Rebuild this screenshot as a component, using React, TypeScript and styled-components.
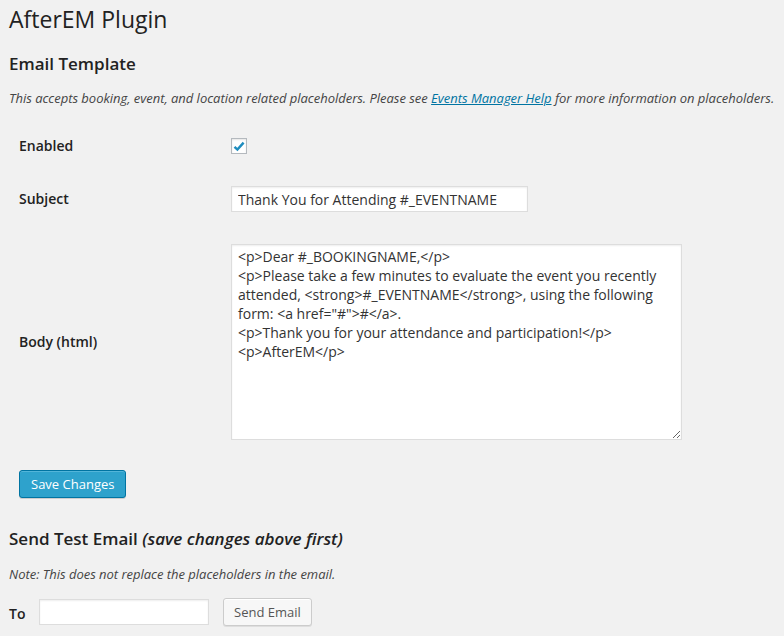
import React from "react";
import styled, { createGlobalStyle } from "styled-components";

const GlobalStyle = createGlobalStyle`
  html, body {
    margin: 0;
    padding: 0;
    background: #f1f1f1;
  }
  body {
    font-family: "Open Sans", "Liberation Sans", sans-serif;
    font-size: 13px;
    line-height: 1.4;
    color: #444;
  }
  * { box-sizing: border-box; }
`;

const Wrap = styled.div`
  padding: 0 0 0 9px;
  width: 784px;
  height: 636px;
  overflow: hidden;
`;

const Title = styled.h1`
  margin: 5px 0 0;
  font-size: 23px;
  line-height: 29px;
  font-weight: 400;
  color: #222;
`;

const SectionTitle = styled.h2<{ $top: number }>`
  margin: ${(p) => p.$top}px 0 0;
  font-size: 17px;
  line-height: 23px;
  font-weight: 600;
  color: #222;
  em { font-style: italic; }
`;

const Description = styled.p<{ $top: number }>`
  margin: ${(p) => p.$top}px 0 0;
  font-size: 13px;
  line-height: 19px;
  font-style: italic;
  letter-spacing: -0.02px;
  color: #444;
  a {
    color: #0074a2;
    text-decoration: underline;
  }
`;

const FormTable = styled.div`
  margin-top: 14px;
  padding-left: 10px;
  display: flex;
  flex-direction: column;
`;

const FormRow = styled.div`
  display: grid;
  grid-template-columns: 212px 1fr;
  align-items: center;
  padding: 16px 0;
`;

const Label = styled.label`
  font-size: 14px;
  line-height: 16px;
  font-weight: 600;
  color: #222;
`;

const Control = styled.div`
  display: flex;
  align-items: center;
`;

const CheckBox = styled.span`
  width: 16px;
  height: 16px;
  border: 1px solid #b4b9be;
  background: #fff;
  box-shadow: inset 0 1px 2px rgba(0, 0, 0, 0.1);
  display: inline-flex;
  align-items: center;
  justify-content: center;
`;

const TextInput = styled.input<{ $width: number }>`
  width: ${(p) => p.$width}px;
  height: 26px;
  margin: 0;
  padding: 0 6px;
  border: 1px solid #ddd;
  background: #fff;
  box-shadow: inset 0 1px 2px rgba(0, 0, 0, 0.07);
  font-family: "Open Sans", "Liberation Sans", sans-serif;
  font-size: 14px;
  color: #333;
  outline: none;
`;

const TextArea = styled.textarea`
  display: block;
  width: 451px;
  height: 196px;
  margin: 0;
  padding: 2px 6px;
  border: 1px solid #ddd;
  background: #fff;
  box-shadow: inset 0 1px 2px rgba(0, 0, 0, 0.07);
  font-family: "Open Sans", "Liberation Sans", sans-serif;
  font-size: 14px;
  line-height: 19px;
  color: #333;
  outline: none;
  resize: both;
`;

const PrimaryButton = styled.button`
  margin: 14px 0 0 10px;
  align-self: flex-start;
  height: 28px;
  padding: 0 11px;
  border: 1px solid #0074a2;
  border-radius: 3px;
  background: #2ea2cc;
  color: #fff;
  font-family: "Open Sans", "Liberation Sans", sans-serif;
  font-size: 13px;
  line-height: 26px;
  box-shadow: inset 0 1px 0 rgba(120, 200, 230, 0.5), 0 1px 0 rgba(0, 0, 0, 0.15);
  cursor: pointer;
`;

const TestRow = styled.div`
  margin-top: 14px;
  display: flex;
  align-items: center;
`;

const ToLabel = styled.label`
  width: 30px;
  font-size: 14px;
  line-height: 20px;
  font-weight: 600;
  color: #222;
  padding-top: 3px;
`;

const SecondaryButton = styled.button`
  margin-left: 14px;
  height: 28px;
  padding: 0 10px;
  border: 1px solid #ccc;
  border-radius: 3px;
  background: #f7f7f7;
  color: #555;
  font-family: "Open Sans", "Liberation Sans", sans-serif;
  font-size: 13px;
  line-height: 26px;
  box-shadow: inset 0 1px 0 #fff, 0 1px 0 rgba(0, 0, 0, 0.08);
  cursor: pointer;
`;

const bodyText = `<p>Dear #_BOOKINGNAME,</p>
<p>Please take a few minutes to evaluate the event you recently attended, <strong>#_EVENTNAME</strong>, using the following form: <a href="#">#</a>.
<p>Thank you for your attendance and participation!</p>
<p>AfterEM</p>`;

export default function App() {
  return (
    <>
      <GlobalStyle />
      <Wrap>
        <Title>AfterEM Plugin</Title>
        <SectionTitle $top={18}>Email Template</SectionTitle>
        <Description $top={14}>
          This accepts booking, event, and location related placeholders. Please see{" "}
          <a href="#">Events Manager Help</a> for more information on placeholders.
        </Description>
        <FormTable>
          <FormRow>
            <Label>Enabled</Label>
            <Control>
              <CheckBox role="checkbox" aria-checked="true">
                <svg width="12" height="11" viewBox="0 0 12 11">
                  <path d="M1.5 5.8 L4.4 8.6 L10.6 1.6" fill="none" stroke="#1e8cbe" strokeWidth="2.4" />
                </svg>
              </CheckBox>
            </Control>
          </FormRow>
          <FormRow>
            <Label>Subject</Label>
            <Control>
              <TextInput $width={297} defaultValue="Thank You for Attending #_EVENTNAME" />
            </Control>
          </FormRow>
          <FormRow>
            <Label>Body (html)</Label>
            <Control>
              <TextArea defaultValue={bodyText} spellCheck={false} />
            </Control>
          </FormRow>
        </FormTable>
        <PrimaryButton>Save Changes</PrimaryButton>
        <SectionTitle $top={29}>
          Send Test Email <em>(save changes above first)</em>
        </SectionTitle>
        <Description $top={15}>Note: This does not replace the placeholders in the email.</Description>
        <TestRow>
          <ToLabel>To</ToLabel>
          <TextInput $width={170} />
          <SecondaryButton>Send Email</SecondaryButton>
        </TestRow>
      </Wrap>
    </>
  );
}
